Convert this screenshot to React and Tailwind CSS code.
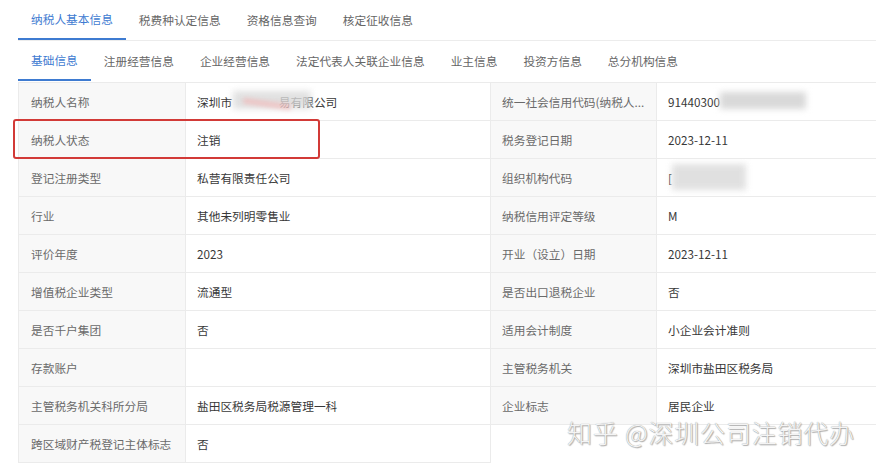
const TOP_TABS = ['纳税人基本信息', '税费种认定信息', '资格信息查询', '核定征收信息'];
const SUB_TABS = ['基础信息', '注册经营信息', '企业经营信息', '法定代表人关联企业信息', '业主信息', '投资方信息', '总分机构信息'];

// [label, value, label, value]
const ROWS = [
  ['纳税人名称', 'name', '统一社会信用代码(纳税人...', 'credit'],
  ['纳税人状态', '注销', '税务登记日期', '2023-12-11'],
  ['登记注册类型', '私营有限责任公司', '组织机构代码', 'org'],
  ['行业', '其他未列明零售业', '纳税信用评定等级', 'M'],
  ['评价年度', '2023', '开业（设立）日期', '2023-12-11'],
  ['增值税企业类型', '流通型', '是否出口退税企业', '否'],
  ['是否千户集团', '否', '适用会计制度', '小企业会计准则'],
  ['存款账户', '', '主管税务机关', '深圳市盐田区税务局'],
  ['主管税务机关科所分局', '盐田区税务局税源管理一科', '企业标志', '居民企业'],
  ['跨区域财产税登记主体标志', '否', null, null],
];

function Blur({ className }) {
  return <span className={`absolute bg-[#d9d9d9] blur-[3px] ${className}`} />;
}

function Value({ v }) {
  if (v === 'name') {
    return (
      <span className="relative">
        深圳市<span className="text-white">某某某商</span>易有限公司
        <Blur className="left-[36px] top-[-2px] h-[18px] w-[78px] opacity-80" />
        <span className="absolute left-[46px] top-[8px] h-[6px] w-[48px] rotate-[8deg] bg-[#f4b3b3] opacity-60 blur-[2px]" />
      </span>
    );
  }
  if (v === 'credit') {
    return (
      <span className="relative">
        91440300
        <Blur className="left-[52px] top-[-1px] h-[17px] w-[86px]" />
      </span>
    );
  }
  if (v === 'org') {
    return (
      <span className="relative">
        [
        <Blur className="left-[4px] top-[-5px] h-[26px] w-[74px] opacity-80" />
      </span>
    );
  }
  return v;
}

function Row({ r }) {
  const cell = 'flex h-[38px] items-center border-b border-r border-[#ebebeb] truncate';
  return (
    <>
      <div className={`${cell} bg-[#f8f8f8] pl-[12px] text-[#6a6a6a]`}>{r[0]}</div>
      <div className={`${cell} pl-[11px] text-[#383838]`}><Value v={r[1]} /></div>
      {r[2] ? (
        <>
          <div className={`${cell} bg-[#f8f8f8] pl-[11px] text-[#6a6a6a]`}>{r[2]}</div>
          <div className={`${cell} border-r-0 pl-[11px] text-[#383838]`}><Value v={r[3]} /></div>
        </>
      ) : (
        <>
          <div />
          <div />
        </>
      )}
    </>
  );
}

export default function App() {
  return (
    <div className="relative h-[465px] w-[876px] overflow-hidden bg-white text-[11.7px] [font-family:'Noto_Sans_CJK_SC','Liberation_Sans',sans-serif]">
      {/* top tabs */}
      <div className="ml-[18px] flex h-[41px] border-b border-[#ececec]">
        {TOP_TABS.map((t, i) => (
          <div
            key={t}
            className={`flex items-center px-[13px] pb-[1px] ${i === 0 ? 'border-b-2 border-[#3e7bd1] text-[#3e7bd1]' : 'text-[#666]'}`}
          >
            {t}
          </div>
        ))}
      </div>

      {/* sub tabs */}
      <div className="ml-[18px] flex h-[40px]">
        {SUB_TABS.map((t, i) => (
          <div
            key={t}
            className={`flex items-center px-[13px] ${i === 0 ? 'border-b-2 border-[#3e7bd1] text-[#3e7bd1]' : 'text-[#666]'}`}
          >
            {t}
          </div>
        ))}
      </div>

      {/* detail table */}
      <div className="ml-[18px] mt-[1px] grid grid-cols-[167px_305px_166px_1fr] border-t border-l border-[#ebebeb]">
        {ROWS.map((r) => (
          <Row key={r[0]} r={r} />
        ))}
      </div>

      {/* annotation box */}
      <div className="absolute left-[13px] top-[119px] h-[40px] w-[307px] rounded-[3px] border-2 border-[#d23a37]" />

      {/* watermark */}
      <div className="absolute left-[567px] top-[414px] whitespace-nowrap text-[25px] tracking-[0.8px] font-light text-[#f4f4f4] [text-shadow:0_0_1px_#8a8a8a,1px_1px_1px_#b0b0b0]">
        知乎 @深圳公司注销代办
      </div>
    </div>
  );
}
